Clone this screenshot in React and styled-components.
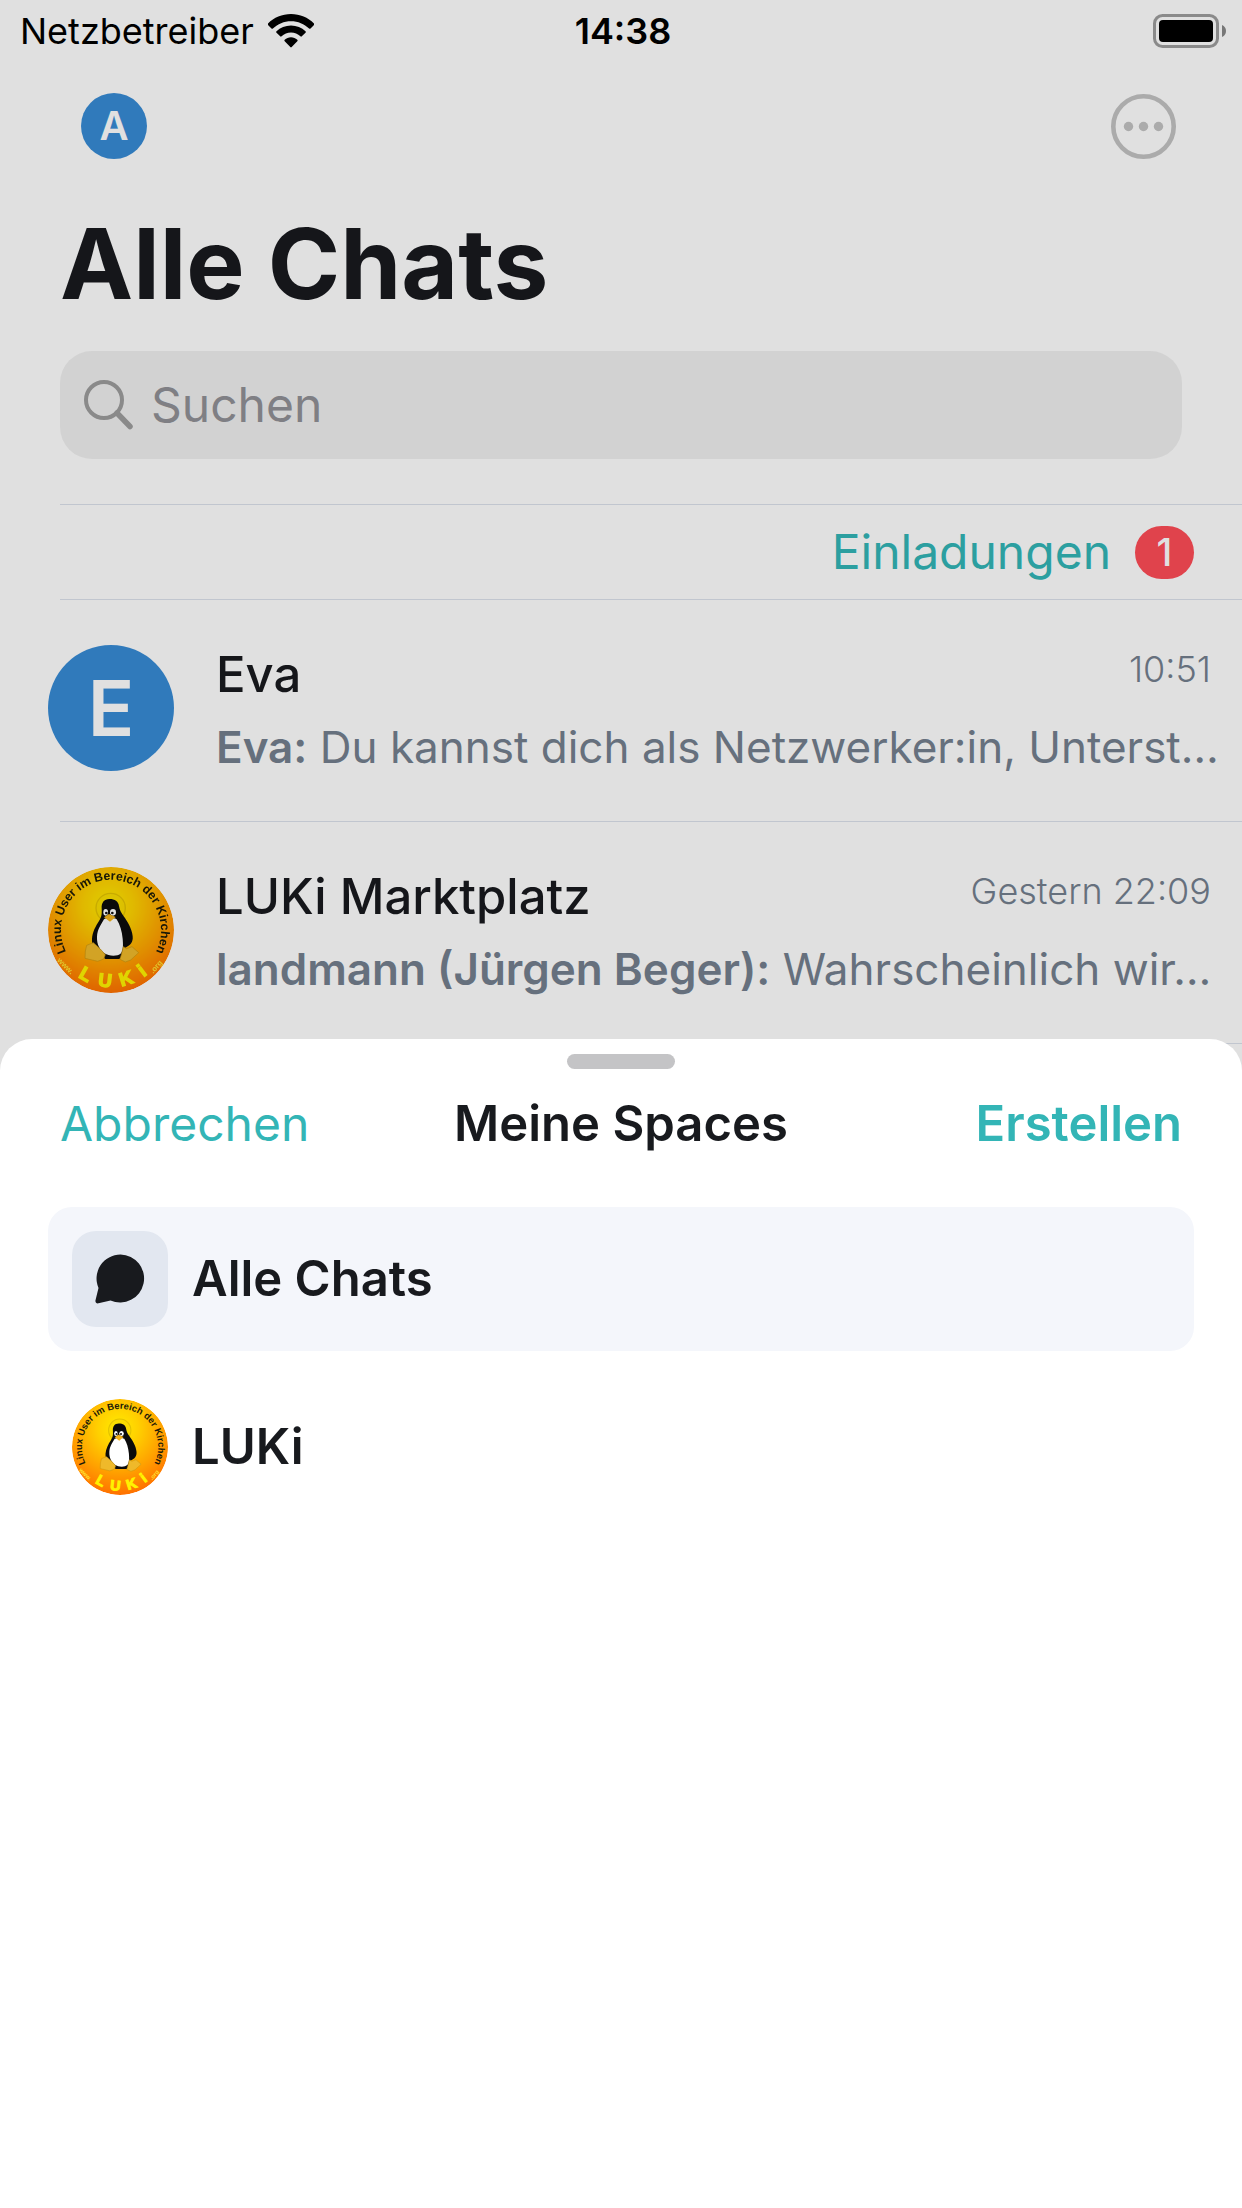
import React, { useId } from "react";
import styled, { createGlobalStyle } from "styled-components";

const GlobalStyle = createGlobalStyle`
  *, *::before, *::after { box-sizing: border-box; }
  body {
    margin: 0;
    background: #e0e0e0;
    color: #15161a;
    font-family: Inter, "Noto Sans", sans-serif;
  }
  h1, h2, p { margin: 0; }
  ul { margin: 0; padding: 0; list-style: none; }
  button {
    margin: 0;
    padding: 0;
    border: 0;
    background: none;
    color: inherit;
    font: inherit;
    cursor: pointer;
  }
`;

const Page = styled.div`
  display: flex;
  flex-direction: column;
  min-height: 100vh;
`;

const StatusBar = styled.div`
  display: grid;
  grid-template-columns: 1fr auto 1fr;
  align-items: center;
  height: 62px;
  padding: 0 16px 0 20px;
  color: #000;
  font-size: 36px;
  line-height: 48px;
`;

const Carrier = styled.div`
  display: flex;
  align-items: center;
  gap: 14px;
`;

const Clock = styled.time`
  font-weight: 600;
`;

const BatterySlot = styled.div`
  display: flex;
  justify-content: flex-end;
`;

const TopBar = styled.div`
  display: flex;
  align-items: center;
  justify-content: space-between;
  height: 128px;
  padding: 0 66px 0 81px;
`;

const Avatar = styled.span`
  display: flex;
  flex: none;
  align-items: center;
  justify-content: center;
  width: ${(p) => p.$size}px;
  height: ${(p) => p.$size}px;
  border-radius: 50%;
  background: #307abb;
  color: #e0e0e0;
  font-size: ${(p) => p.$font}px;
  font-weight: 600;
  line-height: 1;
`;

const IconButton = styled.button`
  display: flex;
`;

const PageTitle = styled.h1`
  margin-top: 14px;
  padding: 0 60px;
  font-size: 98px;
  font-weight: 700;
  line-height: 120px;
`;

const SearchField = styled.label`
  display: flex;
  align-items: center;
  gap: 17px;
  height: 108px;
  margin: 27px 60px 45px;
  padding: 0 24px;
  border-radius: 32px;
  background: #d2d2d2;
`;

const SearchInput = styled.input`
  flex: 1;
  min-width: 0;
  padding: 0;
  border: 0;
  outline: 0;
  background: none;
  color: #15161a;
  font-family: inherit;
  font-size: 48px;
  line-height: 60px;
  &::placeholder { color: #7f7f84; opacity: 1; }
`;

const Invites = styled.button`
  display: flex;
  align-items: center;
  justify-content: flex-end;
  gap: 24px;
  height: 96px;
  margin-left: 60px;
  padding-right: 48px;
  border-top: 1px solid #c1c6cf;
  border-bottom: 1px solid #c1c6cf;
  color: #2c9fa0;
  font-size: 48px;
  line-height: 60px;
`;

const Badge = styled.span`
  display: flex;
  align-items: center;
  justify-content: center;
  width: 59px;
  height: 53px;
  border-radius: 27px;
  background: #e0434c;
  color: #e0e0e0;
  font-size: 38px;
  font-weight: 500;
`;

const ChatRow = styled.li`
  display: flex;
  align-items: flex-start;
  gap: 42px;
  height: 222px;
  padding: 45px 16px 0 48px;
  background: linear-gradient(#c1c6cf, #c1c6cf) 60px 100% / 100% 1px no-repeat;
`;

const ChatBody = styled.div`
  display: flex;
  flex: 1;
  flex-direction: column;
  gap: 15px;
  min-width: 0;
`;

const ChatHead = styled.div`
  display: flex;
  align-items: flex-start;
  justify-content: space-between;
  padding-right: 15px;
`;

const ChatName = styled.h2`
  font-size: 49px;
  font-weight: 500;
  line-height: 60px;
`;

const ChatTime = styled.time`
  color: #66707d;
  font-size: 36px;
  font-weight: 300;
  line-height: 48px;
`;

const Preview = styled.p`
  overflow: hidden;
  color: #66707d;
  font-size: 44px;
  line-height: 54px;
  text-overflow: ellipsis;
  white-space: nowrap;
`;

const Sender = styled.b`
  font-weight: 600;
`;

const Sheet = styled.section`
  display: flex;
  flex: 1;
  flex-direction: column;
  margin-top: -5px;
  border-radius: 32px 32px 0 0;
  background: #fff;
  color: #181a1e;
`;

const Grabber = styled.div`
  align-self: center;
  width: 108px;
  height: 15px;
  margin-top: 15px;
  border-radius: 8px;
  background: #c4c4c6;
`;

const SheetHeader = styled.header`
  display: grid;
  grid-template-columns: 1fr auto 1fr;
  align-items: center;
  height: 110px;
  margin-bottom: 28px;
  padding: 0 60px;
`;

const SheetTitle = styled.h2`
  font-size: 49px;
  font-weight: 600;
  line-height: 60px;
`;

const SheetAction = styled.button`
  justify-self: ${(p) => (p.$primary ? "end" : "start")};
  color: #33b5b6;
  font-size: ${(p) => (p.$primary ? 49 : 48)}px;
  font-weight: ${(p) => (p.$primary ? 600 : 400)};
  line-height: 60px;
`;

const SpaceList = styled.ul`
  display: flex;
  flex-direction: column;
  gap: 24px;
  padding: 0 48px;
`;

const SpaceButton = styled.button`
  display: flex;
  align-items: center;
  gap: 24px;
  width: 100%;
  height: 144px;
  padding: 0 24px;
  border-radius: 24px;
  background: ${(p) => (p.$active ? "#f4f6fb" : "transparent")};
  font-size: 49px;
  font-weight: 600;
  line-height: 60px;
  text-align: left;
`;

const SpaceIcon = styled.span`
  display: flex;
  align-items: center;
  justify-content: center;
  width: 96px;
  height: 96px;
  border-radius: 24px;
  background: #e2e7f0;
`;

const LogoSvg = styled.svg`
  flex: none;
  border-radius: 50%;
  filter: ${(p) => (p.$dimmed ? "brightness(0.88)" : "none")};
`;

function WifiIcon() {
  return (
    <svg width="46" height="34" viewBox="0 0 46 34" aria-hidden="true">
      <path d="M23 0C14 0 6 3.500 0 9.500a1 1 0 0 0 0 1.500l3.500 3.500a1 1 0 0 0 1.400 0C9.800 9.800 16 7.200 23 7.200s13.200 2.600 18.100 7.300a1 1 0 0 0 1.400 0L46 11a1 1 0 0 0 0-1.500C40 3.500 32 0 23 0z" />
      <path d="M23 11.500c-5.600 0-10.700 2.100-14.500 5.700a1 1 0 0 0 0 1.500l3.700 3.600a1 1 0 0 0 1.400 0c2.500-2.300 5.800-3.700 9.400-3.700s6.900 1.400 9.400 3.700a1 1 0 0 0 1.400 0l3.700-3.600a1 1 0 0 0 0-1.500c-3.800-3.600-8.900-5.700-14.500-5.700z" />
      <path d="M23 23.300c-2.400 0-4.600.9-6.300 2.400a1 1 0 0 0 0 1.500l5.600 5.900a1 1 0 0 0 1.400 0l5.600-5.900a1 1 0 0 0 0-1.500c-1.700-1.500-3.900-2.400-6.300-2.400z" />
    </svg>
  );
}

function BatteryIcon() {
  return (
    <svg width="73" height="34" viewBox="0 0 73 34" aria-label="Batterie">
      <rect x="1.500" y="1.500" width="63" height="31" rx="8" fill="none" stroke="#8a8a8a" strokeWidth="3" />
      <rect x="6" y="6" width="54" height="22" rx="4" />
      <path d="M69 11c2.700 1 4 3.400 4 6s-1.300 5-4 6z" fill="#777" />
    </svg>
  );
}

function MoreIcon() {
  return (
    <svg width="65" height="65" viewBox="0 0 65 65" fill="#ababab" aria-hidden="true">
      <circle cx="32.500" cy="32.500" r="30.200" fill="none" stroke="#ababab" strokeWidth="4.600" />
      <circle cx="17.500" cy="32.500" r="4.700" />
      <circle cx="32.500" cy="32.500" r="4.700" />
      <circle cx="47.500" cy="32.500" r="4.700" />
    </svg>
  );
}

function SearchIcon() {
  return (
    <svg width="50" height="50" viewBox="0 0 50 50" fill="none" stroke="#8a8a8a" aria-hidden="true">
      <circle cx="20" cy="20" r="18" strokeWidth="4" />
      <path d="M33 33l13 13.500" strokeWidth="5.500" strokeLinecap="round" />
    </svg>
  );
}

function BubbleIcon() {
  return (
    <svg width="50" height="50" viewBox="0 0 50 50" fill="#181a1e" aria-hidden="true">
      <path d="M25.500.5a24 24 0 1 1-10 46L3.500 49.300C1.500 49.800 0 48.300.5 46.300L3.500 34A24 24 0 0 1 25.500.5z" />
    </svg>
  );
}

function LukiLogo({ size, dimmed }) {
  const id = useId().replace(/[^a-zA-Z0-9]/g, "");
  const glow = `glow${id}`;
  const top = `top${id}`;
  const bottom = `bottom${id}`;
  return (
    <LogoSvg width={size} height={size} viewBox="54 51 378 378" $dimmed={dimmed} aria-hidden="true">
      <defs>
        <radialGradient id={glow} gradientUnits="userSpaceOnUse" cx="235" cy="165" r="265">
          <stop offset="0" stopColor="#ffec00" />
          <stop offset="0.300" stopColor="#ffd000" />
          <stop offset="0.650" stopColor="#ffa200" />
          <stop offset="1" stopColor="#ff7000" />
        </radialGradient>
        <path id={top} d="M107 303A150 150 0 1 1 379 303" />
        <path id={bottom} d="M86 310A172 172 0 0 0 402 305" />
      </defs>
      <circle cx="243" cy="240" r="189" fill={`url(#${glow})`} />
      <g fontFamily='"Liberation Sans", sans-serif' fontWeight="700" textAnchor="middle">
        <text fontSize="37" fill="#1c1a08">
          <textPath href={`#${top}`} startOffset="50%">Linux User im Bereich der Kirchen</textPath>
        </text>
        <text fontSize="56" fill="#fff200" stroke="#fff200" strokeWidth="4">
          <textPath href={`#${bottom}`} startOffset="51%">{"L\u00a0\u00a0U\u00a0\u00a0K\u00a0\u00a0i"}</textPath>
        </text>
        <text fontSize="23" fill="#ffe030" transform="translate(101 353) rotate(45)">www.</text>
        <text fontSize="23" fill="#ffe030" transform="translate(384 355) rotate(-50)">.org</text>
      </g>
      <circle cx="242" cy="174" r="44" fill="#f2d800" fillOpacity="0.400" stroke="#c9a800" strokeOpacity="0.500" strokeWidth="4" />
      <path d="M238 147c-16 0-24 11-23 28 1 18 0 26-8 38-10 15-20 34-21 54-1 18 8 32 22 44l18 16h40c8 0 18-20 20-34 14-6 24-16 22-34-2-24-17-46-27-60-7-11-12-18-14-31-2-14-12-21-29-21z" fill="#0b0b0b" />
      <path d="M222 208c-9 16-20 30-21 52-1 24 9 40 22 50 14 9 38 11 50 0 8-12 6-30 5-44-2-22-8-42-18-58-10-6-28-6-38 0z" fill="#fff" />
      <ellipse cx="227" cy="187" rx="7" ry="10" fill="#fff" />
      <ellipse cx="249" cy="187" rx="9" ry="10" fill="#fff" />
      <circle cx="229" cy="189" r="4" fill="#111" />
      <circle cx="247" cy="189" r="4" fill="#111" />
      <path d="M222 202l15-10 20 9-17 14z" fill="#f3b21a" />
      <path d="M170 286l20-8 20 18 16 18-5 13-18 7-38-9 1-22z" fill="#efb92a" stroke="#c99512" strokeWidth="2" />
      <path d="M280 290l10 6 16-6 20 18-24 22-16 6-16-8 4-14z" fill="#efb92a" stroke="#c99512" strokeWidth="2" />
    </LogoSvg>
  );
}

const chats = [
  {
    name: "Eva",
    time: "10:51",
    sender: "Eva:",
    text: "Du kannst dich als Netzwerker:in, Unterst…",
    avatar: <Avatar $size={126} $font={77}>E</Avatar>,
  },
  {
    name: "LUKi Marktplatz",
    time: "Gestern 22:09",
    sender: "landmann (Jürgen Beger):",
    text: "Wahrscheinlich wir…",
    avatar: <LukiLogo size={126} dimmed />,
  },
];

export default function App() {
  return (
    <Page>
      <GlobalStyle />
      <StatusBar>
        <Carrier>
          Netzbetreiber
          <WifiIcon />
        </Carrier>
        <Clock>14:38</Clock>
        <BatterySlot>
          <BatteryIcon />
        </BatterySlot>
      </StatusBar>

      <TopBar>
        <IconButton aria-label="Profil">
          <Avatar $size={66} $font={40}>A</Avatar>
        </IconButton>
        <IconButton aria-label="Mehr">
          <MoreIcon />
        </IconButton>
      </TopBar>

      <PageTitle>Alle Chats</PageTitle>
      <SearchField>
        <SearchIcon />
        <SearchInput type="search" placeholder="Suchen" aria-label="Suchen" />
      </SearchField>

      <Invites>
        Einladungen
        <Badge>1</Badge>
      </Invites>
      <ul>
        {chats.map((chat) => (
          <ChatRow key={chat.name}>
            {chat.avatar}
            <ChatBody>
              <ChatHead>
                <ChatName>{chat.name}</ChatName>
                <ChatTime>{chat.time}</ChatTime>
              </ChatHead>
              <Preview>
                <Sender>{chat.sender}</Sender> {chat.text}
              </Preview>
            </ChatBody>
          </ChatRow>
        ))}
      </ul>

      <Sheet aria-label="Meine Spaces">
        <Grabber />
        <SheetHeader>
          <SheetAction>Abbrechen</SheetAction>
          <SheetTitle>Meine Spaces</SheetTitle>
          <SheetAction $primary>Erstellen</SheetAction>
        </SheetHeader>
        <SpaceList>
          <li>
            <SpaceButton $active>
              <SpaceIcon>
                <BubbleIcon />
              </SpaceIcon>
              Alle Chats
            </SpaceButton>
          </li>
          <li>
            <SpaceButton>
              <LukiLogo size={96} />
              LUKi
            </SpaceButton>
          </li>
        </SpaceList>
      </Sheet>
    </Page>
  );
}
